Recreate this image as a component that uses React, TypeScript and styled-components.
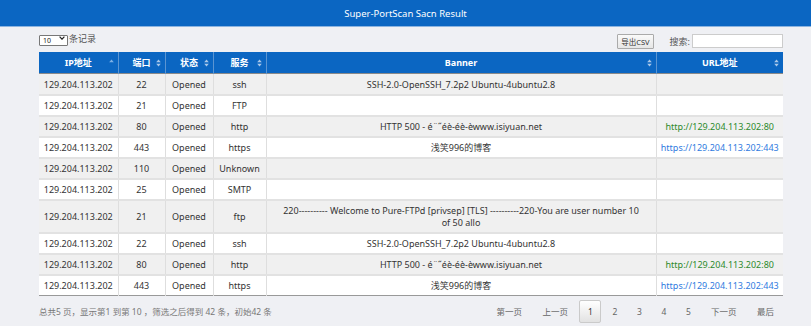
import React from 'react';
import styled, { createGlobalStyle } from 'styled-components';

const GlobalStyle = createGlobalStyle`
  html, body {
    margin: 0;
    padding: 0;
    background: #eff0f4;
    font-family: "Noto Sans", "Noto Sans CJK SC", sans-serif;
  }
`;

const TopBar = styled.header`
  height: 26px;
  background: #0b66c2;
  border-bottom: 1px solid #8cb4e0;
  color: #fff;
  font-size: 9.5px;
  display: flex;
  align-items: center;
  justify-content: center;
`;

const Content = styled.main`
  padding: 0 28px 0 39px;
`;

const Toolbar = styled.div`
  height: 25px;
  display: flex;
  align-items: center;
  font-size: 9px;
  color: #555;
`;

const SelectWrap = styled.div`
  position: relative;
  width: 29px;
  height: 11px;
  margin-top: -2px;
`;

const LengthSelect = styled.select`
  appearance: none;
  width: 29px;
  height: 11px;
  font-size: 7px;
  line-height: 9px;
  padding: 0 0 0 3px;
  border: 1px solid #777;
  border-radius: 1px;
  background: #fff;
  color: #222;
  font-family: inherit;
  box-sizing: border-box;
`;

const Chevron = styled.svg`
  position: absolute;
  right: 3px;
  top: 3px;
  pointer-events: none;
`;

const LengthLabel = styled.span`
  margin-left: 1px;
  margin-top: -3px;
`;

const Spacer = styled.div`
  flex: 1;
`;

const CsvButton = styled.button`
  height: 15px;
  padding: 0 3px;
  font-size: 7.5px;
  font-family: inherit;
  color: #333;
  background: linear-gradient(#fafafa, #e6e6e6);
  border: 1px solid #aaa;
  border-radius: 1px;
  margin-right: 16px;
  margin-top: 3px;
`;

const SearchLabel = styled.label`
  display: flex;
  align-items: center;
  gap: 2px;
  margin-top: 3px;
`;

const SearchInput = styled.input`
  width: 85px;
  height: 10px;
  border: 1px solid #ccc;
  background: #fff;
`;

const Table = styled.table`
  width: 744px;
  border-collapse: collapse;
  table-layout: fixed;
  font-size: 9px;
  color: #333;
  border-bottom: 1px solid #999;
`;

const Head = styled.thead`
  border-bottom: 1px solid #8a8a8a;
`;

const HeadCell = styled.th`
  height: 21px;
  padding: 0;
  background: #0b66c2;
  color: #fff;
  font-weight: bold;
  font-size: 9px;
  border-left: 1px solid #5b95d2;
  position: relative;
  &:first-child {
    border-left: none;
  }
`;

const SortIcon = styled.svg`
  position: absolute;
  right: 4px;
  top: 7px;
`;

const Row = styled.tr<{ $odd: boolean }>`
  background: ${({ $odd }) => ($odd ? '#f0f0f0' : '#fff')};
`;

const Cell = styled.td<{ $wide?: boolean }>`
  text-align: center;
  padding: 4px ${({ $wide }) => ($wide ? '12px' : '4px')} 3px;
  line-height: 12px;
  border-left: 1px solid #dedede;
  border-top: 2px solid #e2e2e2;
  tr:first-child > & {
    border-top: none;
    padding-top: 5px;
  }
  &:first-child {
    border-left: none;
  }
`;

const UrlLink = styled.span<{ $secure: boolean }>`
  color: ${({ $secure }) => ($secure ? '#2f7be0' : '#2c8a2c')};
`;

const Footer = styled.div`
  height: 29px;
  display: flex;
  align-items: center;
  justify-content: space-between;
  font-size: 8.5px;
  color: #777;
`;

const Pager = styled.div`
  display: flex;
  align-items: center;
  padding-top: 1px;
`;

const PageButton = styled.span<{ $active?: boolean; $num?: boolean }>`
  box-sizing: border-box;
  height: 23px;
  ${({ $num }) => ($num ? 'width: 22px;' : 'padding: 0 8px;')}
  margin-left: 2.5px;
  display: flex;
  align-items: center;
  justify-content: center;
  font-size: 8.5px;
  color: ${({ $active }) => ($active ? '#333' : '#666')};
  border: 1px solid ${({ $active }) => ($active ? '#cacaca' : 'transparent')};
  border-radius: 2px;
  background: ${({ $active }) =>
    $active ? 'linear-gradient(#ffffff, #e2e2e2)' : 'transparent'};
`;

const Sort = ({ asc }: { asc?: boolean }) => (
  <SortIcon width="5" height="8" viewBox="0 0 5 8">
    <path d="M2.5 0.5 L4.8 3.3 L0.2 3.3 Z" fill={asc ? '#7fb2e6' : '#a9c8ea'} />
    {!asc && <path d="M2.5 7.5 L4.8 4.7 L0.2 4.7 Z" fill="#a9c8ea" />}
  </SortIcon>
);

const columns = [
  { title: 'IP地址', w: 79, asc: true },
  { title: '端口', w: 47 },
  { title: '状态', w: 48 },
  { title: '服务', w: 53 },
  { title: 'Banner', w: 390 },
  { title: 'URL地址', w: 127 },
];

const IP = '129.204.113.202';
const SSH = 'SSH-2.0-OpenSSH_7.2p2 Ubuntu-4ubuntu2.8';
const HTTP = 'HTTP 500 - é¨˝éè-éè-èwww.isiyuan.net';
const BLOG = '浅笑996的博客';
const FTP =
  '220---------- Welcome to Pure-FTPd [privsep] [TLS] ----------220-You are user number 10 of 50 allo';

const rows = [
  { port: '22', service: 'ssh', banner: SSH, url: '' },
  { port: '21', service: 'FTP', banner: '', url: '' },
  { port: '80', service: 'http', banner: HTTP, url: 'http://129.204.113.202:80' },
  { port: '443', service: 'https', banner: BLOG, url: 'https://129.204.113.202:443' },
  { port: '110', service: 'Unknown', banner: '', url: '' },
  { port: '25', service: 'SMTP', banner: '', url: '' },
  { port: '21', service: 'ftp', banner: FTP, url: '' },
  { port: '22', service: 'ssh', banner: SSH, url: '' },
  { port: '80', service: 'http', banner: HTTP, url: 'http://129.204.113.202:80' },
  { port: '443', service: 'https', banner: BLOG, url: 'https://129.204.113.202:443' },
];

const pages = ['1', '2', '3', '4', '5'];

const App = () => {
  return (
    <>
      <GlobalStyle />
      <TopBar>Super-PortScan Sacn Result</TopBar>
      <Content>
        <Toolbar>
          <SelectWrap>
            <LengthSelect defaultValue="10">
              <option>10</option>
              <option>25</option>
              <option>50</option>
            </LengthSelect>
            <Chevron width="6" height="4" viewBox="0 0 6 4">
              <path d="M0.6 0.6 L3 3.2 L5.4 0.6" stroke="#222" strokeWidth="1.2" fill="none" />
            </Chevron>
          </SelectWrap>
          <LengthLabel>条记录</LengthLabel>
          <Spacer />
          <CsvButton>导出CSV</CsvButton>
          <SearchLabel>
            搜索:
            <SearchInput />
          </SearchLabel>
        </Toolbar>
        <Table>
          <colgroup>
            {columns.map((c) => (
              <col key={c.title} style={{ width: c.w }} />
            ))}
          </colgroup>
          <Head>
            <tr>
              {columns.map((c) => (
                <HeadCell key={c.title}>
                  {c.title}
                  <Sort asc={c.asc} />
                </HeadCell>
              ))}
            </tr>
          </Head>
          <tbody>
            {rows.map((r, i) => (
              <Row key={i} $odd={i % 2 === 0}>
                <Cell>{IP}</Cell>
                <Cell>{r.port}</Cell>
                <Cell>Opened</Cell>
                <Cell>{r.service}</Cell>
                <Cell $wide>{r.banner}</Cell>
                <Cell>
                  {r.url && (
                    <UrlLink $secure={r.url.startsWith('https')}>{r.url}</UrlLink>
                  )}
                </Cell>
              </Row>
            ))}
          </tbody>
        </Table>
        <Footer>
          <span>总共5 页，显示第1 到第 10 ，筛选之后得到 42 条，初始42 条</span>
          <Pager>
            <PageButton>第一页</PageButton>
            <PageButton>上一页</PageButton>
            {pages.map((p) => (
              <PageButton key={p} $num $active={p === '1'}>
                {p}
              </PageButton>
            ))}
            <PageButton>下一页</PageButton>
            <PageButton>最后</PageButton>
          </Pager>
        </Footer>
      </Content>
    </>
  );
};

export default App;
